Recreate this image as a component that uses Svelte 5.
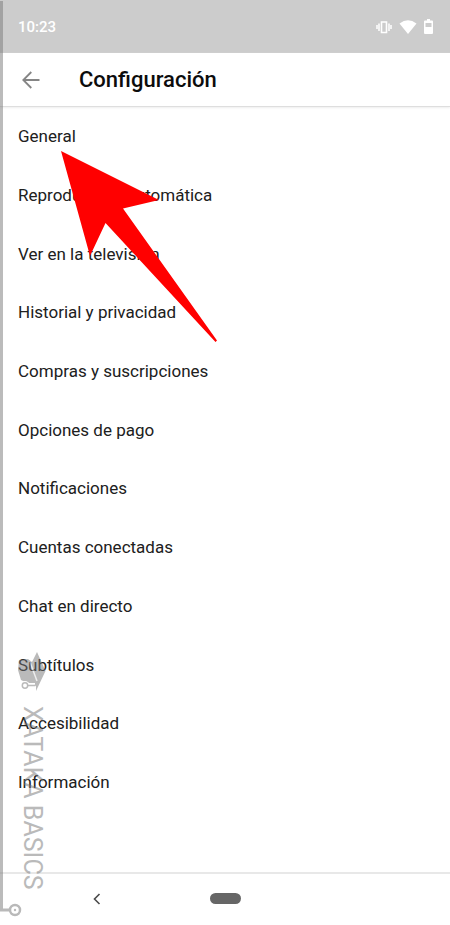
<script>
	const options = [
		'General',
		'Reproducción automática',
		'Ver en la televisión',
		'Historial y privacidad',
		'Compras y suscripciones',
		'Opciones de pago',
		'Notificaciones',
		'Cuentas conectadas',
		'Chat en directo',
		'Subtítulos',
		'Accesibilidad',
		'Información'
	];
</script>

<div class="screen">
	<div class="status">
		<time>10:23</time>
		<div class="indicators">
			<svg width="16" height="14" viewBox="0 0 16 14">
				<path d="M5.5 2h5v10.500h-5z" fill="none" stroke="#fff" stroke-width="1.6" />
				<path d="M3 3.500v7.500M13 3.500v7.500M1 5v4M15 5v4" stroke="#fff" stroke-width="1.5" />
			</svg>
			<svg width="18" height="14" viewBox="0 0 18 14">
				<path d="M0.5 3.500Q9 -3 17.500 3.500L9 14z" fill="#fff" />
			</svg>
			<svg width="9" height="15" viewBox="0 0 9 15">
				<path d="M3 0h3v1.500h2a1 1 0 0 1 1 1V14a1 1 0 0 1-1 1H1a1 1 0 0 1-1-1V2.500a1 1 0 0 1 1-1h2z" fill="#fff" />
				<path d="M1.500 4h6v4h-6z" fill="#ccc" />
			</svg>
		</div>
	</div>

	<header>
		<button class="back" aria-label="Atrás">
			<svg width="18" height="18" viewBox="0 0 18 18">
				<path d="M17.500 9H1.500M9.300 1L1.300 9l8 8" fill="none" stroke="#858585" stroke-width="1.800" />
			</svg>
		</button>
		<h1>Configuración</h1>
	</header>

	<main>
		{#each options as option}
			<button class="option">{option}</button>
		{/each}
	</main>

	<nav>
		<button class="previous" aria-label="Volver">
			<svg width="8" height="12" viewBox="0 0 8 12">
				<path d="M6.500 1L1.500 6l5 5" fill="none" stroke="#4a4a4a" stroke-width="1.600" />
			</svg>
		</button>
		<button class="home" aria-label="Inicio"></button>
	</nav>

	<svg class="pointer" width="158" height="194" viewBox="0 0 158 194">
		<path d="M1 1L99 50L63 58.500L157 190.500L155.500 192L45.500 73L30 106z" fill="#f00" />
	</svg>

	<div class="rail">
		<svg width="22" height="14" viewBox="0 0 22 14">
			<path d="M0 7h9" stroke="#b9b9b9" stroke-width="3" />
			<circle cx="15" cy="7" r="5" fill="none" stroke="#b9b9b9" stroke-width="2.500" />
			<circle cx="15" cy="7" r="1.200" fill="#b9b9b9" />
		</svg>
	</div>

	<div class="watermark">
		<svg width="28" height="40" viewBox="0 0 28 40">
			<path
				d="M19 0L27.500 19L18 39V32L14 34H10L7 30L3 28L0 18L1 8L10 7L14 10z"
				fill="#777"
			/>
			<path d="M12 10L19 29" fill="none" stroke="#ddd" stroke-width="1.500" />
			<circle cx="7" cy="33.500" r="4.500" fill="#fff" />
			<path d="M9 33.500H17" fill="none" stroke="#fff" stroke-width="5" />
			<circle cx="7" cy="33.500" r="2.700" fill="#fff" stroke="#777" stroke-width="1.500" />
			<path d="M9.500 33.500H17L20 30" fill="none" stroke="#777" stroke-width="1.500" />
		</svg>
		<span>XATAKA BASICS</span>
	</div>
</div>

<style>
	:global(body) {
		margin: 0;
		background: #fff;
	}

	.screen {
		position: relative;
		display: flex;
		flex-direction: column;
		min-height: 100vh;
		font-family: Roboto, sans-serif;
		color: #202020;
		overflow: hidden;
	}

	button {
		padding: 0;
		border: 0;
		background: none;
		color: inherit;
		font: inherit;
		cursor: pointer;
	}

	svg {
		display: block;
	}

	.status {
		display: flex;
		justify-content: space-between;
		align-items: center;
		box-sizing: border-box;
		height: 53px;
		padding: 0 17px 0 18px;
		background: #ccc;
		color: #fff;
		font-size: 15px;
		font-weight: 500;
	}

	.indicators {
		display: flex;
		align-items: center;
		gap: 7px;
	}

	header {
		display: flex;
		align-items: center;
		box-sizing: border-box;
		height: 54px;
		padding-left: 22px;
		gap: 39px;
		border-bottom: 1px solid #dedede;
		box-shadow: 0 1px 2px #eee;
	}

	h1 {
		margin: 0;
		color: #0c0c0c;
		font-size: 22px;
		font-weight: 500;
	}

	/* one spare row is left free under the last option */
	main {
		flex: 1;
		display: grid;
		grid-template-rows: repeat(13, 1fr);
		padding-bottom: 2px;
	}

	.option {
		padding-left: 18px;
		font-size: 17px;
		line-height: 24px;
		text-align: left;
	}

	nav {
		display: grid;
		grid-template-columns: 1fr auto 1fr;
		align-items: center;
		box-sizing: border-box;
		height: 53px;
		padding-bottom: 2px;
		border-top: 2px solid #e8e8e8;
	}

	.previous {
		justify-self: start;
		padding-left: 93px;
	}

	.home {
		width: 31px;
		height: 11px;
		border-radius: 6px;
		background: #666;
	}

	.pointer {
		position: absolute;
		top: 150px;
		left: 60px;
		pointer-events: none;
	}

	.rail {
		position: absolute;
		top: 1px;
		bottom: 14px;
		left: 0;
		width: 3px;
		background: rgba(120, 120, 120, 0.5);
		pointer-events: none;
	}

	.rail svg {
		position: absolute;
		bottom: -6px;
		left: 0;
	}

	.watermark {
		position: absolute;
		bottom: 35px;
		left: 18px;
		display: flex;
		flex-direction: column;
		gap: 14px;
		opacity: 0.5;
		pointer-events: none;
	}

	.watermark span {
		color: #777;
		font-size: 25px;
		line-height: 28px;
		writing-mode: vertical-rl;
	}
</style>
